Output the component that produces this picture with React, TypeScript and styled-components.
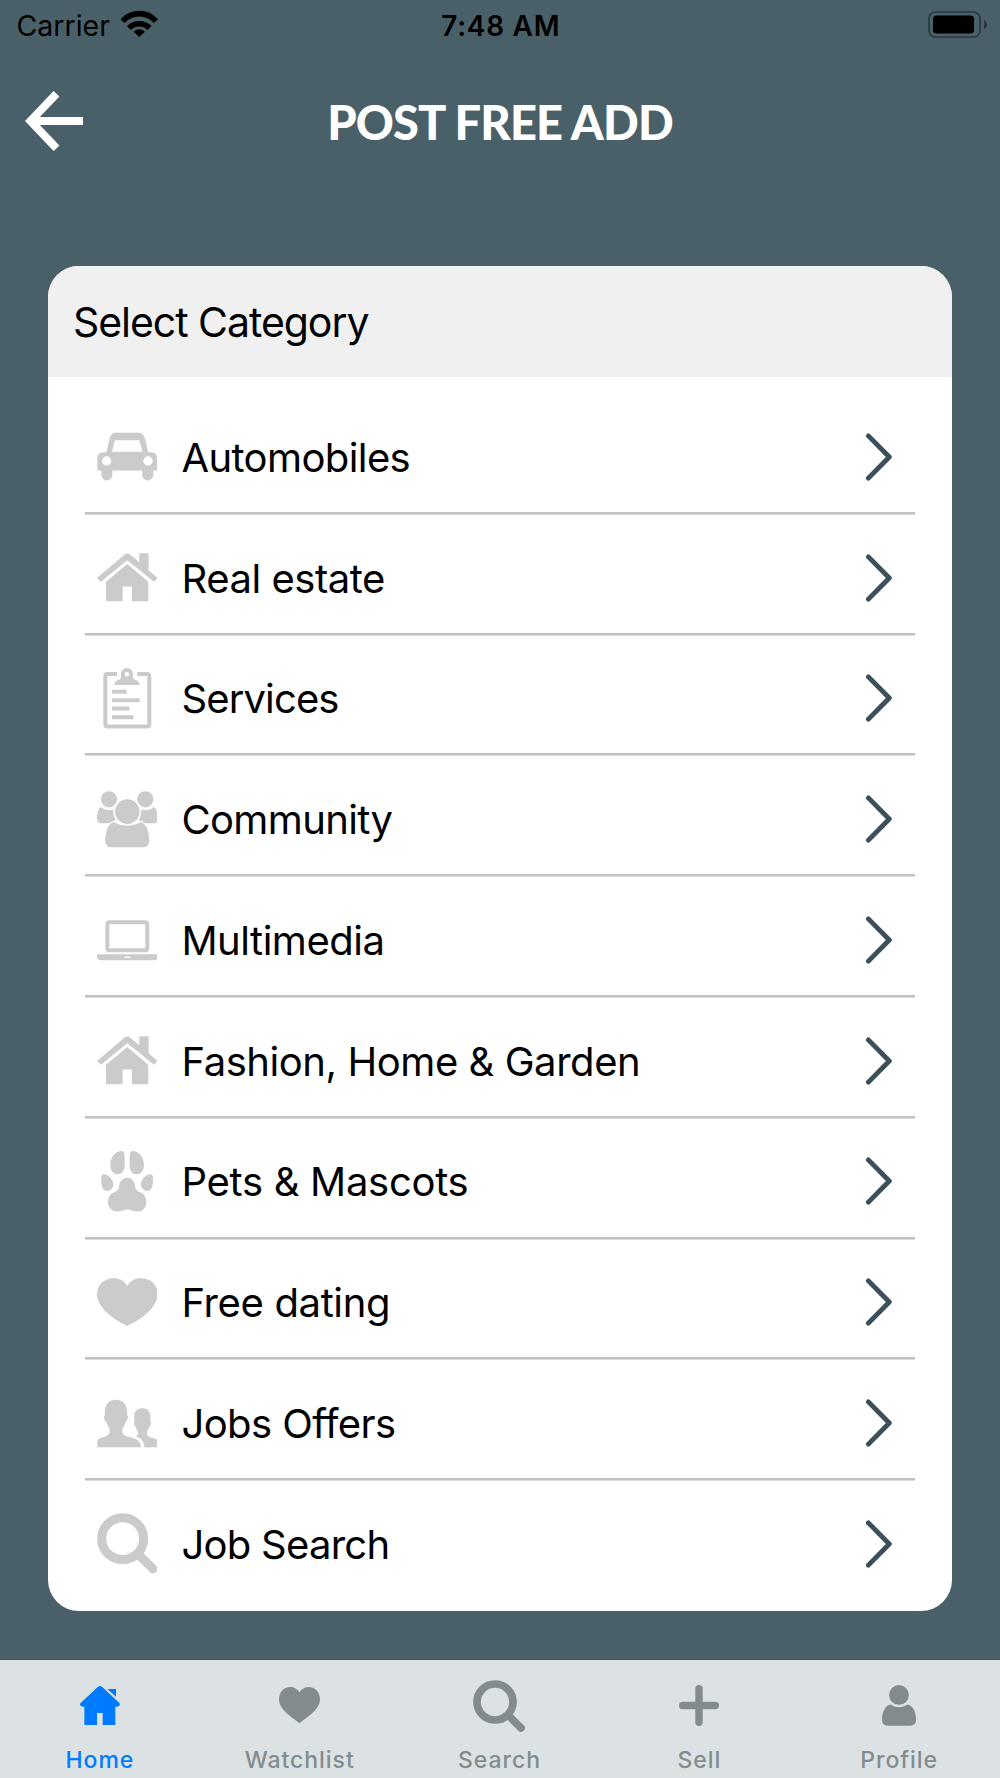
import React from 'react';
import styled, { createGlobalStyle } from 'styled-components';

const GlobalStyle = createGlobalStyle`
  *, *::before, *::after { box-sizing: border-box; }
  body { margin: 0; background: #4a6068; }
`;

const Screen = styled.div`
  display: flex;
  flex-direction: column;
  width: 1000px;
  height: 1778px;
  background: #4a6068;
  color: #000;
  font-family: Inter, "Liberation Sans", sans-serif;
  overflow: hidden;
`;

const StatusBar = styled.div`
  display: grid;
  grid-template-columns: 1fr auto 1fr;
  align-items: center;
  height: 50px;
  padding: 0 13px 0 16.5px;
`;

const Carrier = styled.div`
  display: flex;
  align-items: center;
  gap: 11.5px;
  font-size: 28.5px;
  font-weight: 400;
  letter-spacing: 0;
`;

const WifiIcon = styled.svg`
  width: 36.5px;
  height: 27px;
  margin-top: -3px;
`;

const Clock = styled.div`
  margin: 1px 2px 0 0;
  font-size: 28px;
  font-weight: 600;
  letter-spacing: 0.7px;
`;

const BatteryIcon = styled.svg`
  justify-self: end;
  width: 59px;
  height: 27px;
  margin-top: -2px;
`;

const TopBar = styled.header`
  display: grid;
  grid-template-columns: 60px 1fr 60px;
  align-items: center;
  height: 142px;
  padding: 0 25px;
`;

const BackButton = styled.button`
  display: flex;
  padding: 0;
  border: 0;
  background: none;
`;

const Title = styled.h1`
  margin: 2px 0 0;
  color: #fff;
  font-family: Lato, Inter, sans-serif;
  font-size: 47px;
  font-weight: 900;
  line-height: 56px;
  letter-spacing: -0.85px;
  text-align: center;
`;

const Card = styled.main`
  display: flex;
  flex-direction: column;
  height: 1345.5px;
  margin: 73.5px 48.3px 0;
  border-radius: 31px;
  background: #fff;
  overflow: hidden;
`;

const CardHeader = styled.div<{ $tracking: number }>`
  display: flex;
  align-items: center;
  height: 111.3px;
  padding: 2px 24px 0 24.6px;
  background: #f0f0f0;
  font-size: 41px;
  letter-spacing: ${(p) => p.$tracking}px;
`;

const List = styled.ul`
  margin: 0;
  padding: 16.4px 36.4px 0;
  list-style: none;
`;

const Row = styled.li`
  display: flex;
  align-items: center;
  height: 120.78px;
  padding: 8.4px 23px 0 12.1px;
  border-bottom: 2px solid #c2c2c2;
  box-shadow: 0 1px 0 #dcdcdc;
  &:last-child { border-bottom-color: transparent; box-shadow: none; }
`;

const CategoryIcon = styled.svg`
  width: 60.6px;
  height: 60.6px;
  margin-right: 24.1px;
  color: #cbcbcb;
`;

const RowLabel = styled.span<{ $tracking: number }>`
  flex: 1;
  padding-top: 2px;
  font-size: 40px;
  line-height: 50px;
  letter-spacing: ${(p) => p.$tracking}px;
`;

const Chevron = styled.svg`
  width: 26px;
  height: 48px;
`;

const TabBar = styled.nav`
  display: grid;
  grid-template-columns: repeat(5, 1fr);
  height: 119px;
  margin-top: auto;
  padding-right: 1px;
  border-top: 1px solid #42565e;
  background: #dce2e4;
`;

const Tab = styled.a<{ $active?: boolean }>`
  display: flex;
  flex-direction: column;
  align-items: center;
  color: ${(p) => (p.$active ? '#007aff' : '#828c8e')};
  font-size: 23px;
  font-weight: 500;
  line-height: 18px;
  letter-spacing: 0.95px;
`;

const TabIcon = styled.span`
  display: flex;
  align-items: center;
  justify-content: center;
  height: 91px;
`;

const House = () => (
  <>
    <path d="M0 93L82 23q9-7 18 0l27 23V21q0-2 2-2h24q2 0 2 2v49l27 23-11 11L91 40 12 104z" />
    <path d="M91 51l63 53v56q0 3-3 3h-46v-44H77v44H30q-3 0-3-3v-56z" />
  </>
);

const Car = () => (
  <path
    fillRule="evenodd"
    d="M1 97c0-11 8-18 18-18h9l9-38c3-13 9-21 21-21h66c12 0 18 8 21 21l9 38h9c10 0 18 7 18 18v37h-12v13a16.5 16.5 0 0 1-33 0v-13H46v13a16.5 16.5 0 0 1-33 0v-13H1zM54 43h73l10 34H45zM15 105a14 14 0 1 0 28 0a14 14 0 1 0-28 0zM139 105a14 14 0 1 0 28 0a14 14 0 1 0-28 0z"
  />
);

const Clipboard = () => (
  <>
    <path
      d="M60 18H31a6 6 0 0 0-6 6v146a6 6 0 0 0 6 6h120a6 6 0 0 0 6-6V24a6 6 0 0 0-6-6H121"
      fill="none"
      stroke="currentColor"
      strokeWidth="12"
    />
    <path
      fillRule="evenodd"
      d="M52 51c0-8 5-14 14-16 4-1 6-4 6-10v-7a18 18 0 0 1 36 0v7c0 6 2 9 6 10 9 2 14 8 14 16zM83 19a7 7 0 1 0 14 0a7 7 0 1 0-14 0z"
    />
    <path d="M45 65h44v12H45zM45 91h83v12H45zM45 116h52v12H45zM45 142h64v12H45z" />
  </>
);

const Group = () => (
  <>
    <circle cx="36" cy="31" r="24.5" />
    <circle cx="145" cy="31" r="24.5" />
    <path d="M12 54c-8 4-12 18-12 34 0 10 4 15 12 15h26c5-5 11-8 19-10l-6-32c-12 5-28 3-39-7z" />
    <path d="M170 54c8 4 12 18 12 34 0 10-4 15-12 15h-26c-5-5-11-8-19-10l6-32c12 5 28 3 39-7z" />
    <circle cx="91" cy="68" r="42" fill="#fff" />
    <circle cx="91" cy="68" r="37" />
    <path d="M50 98c-16 8-25 28-25 56 0 14 6 21 18 21h96c12 0 18-7 18-21 0-28-9-48-25-56-24 16-58 16-82 0z" />
  </>
);

const Laptop = () => (
  <>
    <rect x="31" y="37" width="120" height="84" rx="6" fill="none" stroke="currentColor" strokeWidth="12" />
    <path fillRule="evenodd" d="M0 133h182v7c0 7-5 11-11 11H11c-6 0-11-4-11-11zM83 140v4h17v-4z" />
  </>
);

const Paw = () => (
  <>
    <path d="M73 0C52 2 40 22 40 42c0 17 9 28 22 28 13 0 21-10 21-27V18C83 6 80-1 73 0z" />
    <path d="M108 0c21 2 33 22 33 42 0 17-9 28-22 28-13 0-21-10-21-27V18c0-12 3-19 10-18z" />
    <path d="M20 70C13 70 12 80 13 94c1 16 6 26 17 26 10 0 19-8 19-20C49 84 32 70 20 70z" />
    <path d="M161 70c7 0 8 10 7 24-1 16-6 26-17 26-10 0-19-8-19-20 0-16 17-30 29-30z" />
    <path d="M91 80c13 0 22 10 23 24 1 13 8 17 18 21 10 5 16 15 16 28 0 18-12 29-28 29-12 0-19-6-29-6s-17 6-29 6c-16 0-29-11-29-29 0-13 6-23 16-28 10-4 17-8 18-21 1-14 11-24 24-24z" />
  </>
);

const Heart = () => (
  <path d="M91 42C82 27 68 19 50 19 21 19 0 39 0 66c0 45 60 82 91 96 31-14 91-51 91-96 0-27-21-47-50-47-18 0-32 8-41 23z" />
);

const People = () => (
  <>
    <path d="M1 163V146c0-6 4-10 12-12 20-4 25-10 25-20 0-8-3-12-7-18-2-4-3-8-4-11-4-1-6-9-6-13 0-3 1-5 3-6C21 34 36 20 57 20s36 14 33 46c2 1 3 3 3 6 0 4-2 12-6 13-1 3-2 7-4 11-4 6-7 10-7 18 0 10 5 15 24 19 19 4 32 12 32 30z" />
    <path d="M142 163c0-17-9-27-25-32 5-3 7-6 7-10 0-7-4-8-8-20-3-1-5-6-5-11 0-2 1-4 2-5-5-26 4-39 23-39s28 13 24 39c1 1 2 3 2 5 0 5-2 10-5 11-3 10-7 13-7 20 0 8 6 11 17 14 12 3 16 6 16 12v16z" />
  </>
);

const Magnifier = () => (
  <g fill="none" stroke="currentColor" strokeWidth="27">
    <circle cx="77" cy="77" r="63" />
    <path d="M125 125l43 43" strokeLinecap="round" />
  </g>
);

interface Category {
  label: string;
  tracking: number;
  Glyph: React.ComponentType;
}

const categories: Category[] = [
  { label: 'Automobiles', tracking: -0.6, Glyph: Car },
  { label: 'Real estate', tracking: -0.46, Glyph: House },
  { label: 'Services', tracking: -0.88, Glyph: Clipboard },
  { label: 'Community', tracking: -0.65, Glyph: Group },
  { label: 'Multimedia', tracking: -0.49, Glyph: Laptop },
  { label: 'Fashion, Home & Garden', tracking: -0.44, Glyph: House },
  { label: 'Pets & Mascots', tracking: -0.3, Glyph: Paw },
  { label: 'Free dating', tracking: -0.36, Glyph: Heart },
  { label: 'Jobs Offers', tracking: -0.6, Glyph: People },
  { label: 'Job Search', tracking: -0.74, Glyph: Magnifier },
];

const tabs = [
  {
    label: 'Home',
    active: true,
    icon: (
      <svg width="40" height="39.3" viewBox="0 0 120 118" fill="currentColor">
        <path d="M54 2q6-4 12 0l53 50q3 9-7 10h-6v55H68V81H51v36H13V62H8Q-3 61 1 52zM82 9h26v23z" />
      </svg>
    ),
  },
  {
    label: 'Watchlist',
    icon: (
      <svg width="41" height="36.4" viewBox="0 0 123 109" fill="currentColor">
        <path d="M61.5 16C55 6 45 0 34 0 14 0 0 16 0 37c0 32 38 52 61.5 72C85 89 123 69 123 37 123 16 109 0 89 0 78 0 68 6 61.5 16z" />
      </svg>
    ),
  },
  {
    label: 'Search',
    icon: (
      <svg width="52" height="52" viewBox="0 0 182 182" fill="currentColor">
        <Magnifier />
      </svg>
    ),
  },
  {
    label: 'Sell',
    icon: (
      <svg width="40" height="41" viewBox="0 0 40 41" stroke="currentColor" strokeWidth="7.4" strokeLinecap="round">
        <path d="M20 3.7v33.6M3.7 20.5h32.6" />
      </svg>
    ),
  },
  {
    label: 'Profile',
    icon: (
      <svg width="34" height="41" viewBox="0 0 34 41" fill="currentColor">
        <circle cx="17" cy="9.9" r="9.9" />
        <path d="M9 19.6c3 3.6 13 3.6 16 0 6 .5 9 8 9 15 0 4-2 6.2-6 6.2H6c-4 0-6-2.2-6-6.2 0-7 3-14.5 9-15z" />
      </svg>
    ),
  },
];

export default function App() {
  return (
    <Screen>
      <GlobalStyle />
      <StatusBar>
        <Carrier>
          Carrier
          <WifiIcon viewBox="0 0 110 81">
            <path d="M4.500 33.500a67 67 0 0 1 101 0M24 54a44 44 0 0 1 62 0" fill="none" stroke="#000" strokeWidth="17" />
            <path d="M38 65q17-15 34 0L55 81z" />
          </WifiIcon>
        </Carrier>
        <Clock>7:48 AM</Clock>
        <BatteryIcon viewBox="0 0 59 27">
          <rect x="1" y="1" width="51" height="25" rx="6.500" fill="none" stroke="#2b373c" strokeWidth="1.700" />
          <rect x="5" y="4.500" width="41" height="18" rx="3.500" />
          <path d="M56 9q3 1.500 3 4.500t-3 4.500z" fill="#2b373c" />
        </BatteryIcon>
      </StatusBar>

      <TopBar>
        <BackButton aria-label="Back">
          <svg width="58" height="60" viewBox="0 0 58 60" fill="none" stroke="#fff" strokeWidth="8">
            <path d="M58 30H7M31.500 2.700L5.500 30l26 27.300" />
          </svg>
        </BackButton>
        <Title>POST FREE ADD</Title>
      </TopBar>

      <Card>
        <CardHeader $tracking={-1.04}>Select Category</CardHeader>
        <List>
          {categories.map(({ label, tracking, Glyph }) => (
            <Row key={label}>
              <CategoryIcon viewBox="0 0 182 182" fill="currentColor">
                <Glyph />
              </CategoryIcon>
              <RowLabel $tracking={tracking}>{label}</RowLabel>
              <Chevron viewBox="0 0 26 48">
                <path
                  d="M2.400 2.900L23.300 24 2.400 45.100"
                  fill="none"
                  stroke="#3c4f5a"
                  strokeWidth="4.900"
                  strokeLinecap="round"
                  strokeLinejoin="round"
                />
              </Chevron>
            </Row>
          ))}
        </List>
      </Card>

      <TabBar>
        {tabs.map(({ label, active, icon }) => (
          <Tab key={label} $active={active}>
            <TabIcon>{icon}</TabIcon>
            {label}
          </Tab>
        ))}
      </TabBar>
    </Screen>
  );
}
